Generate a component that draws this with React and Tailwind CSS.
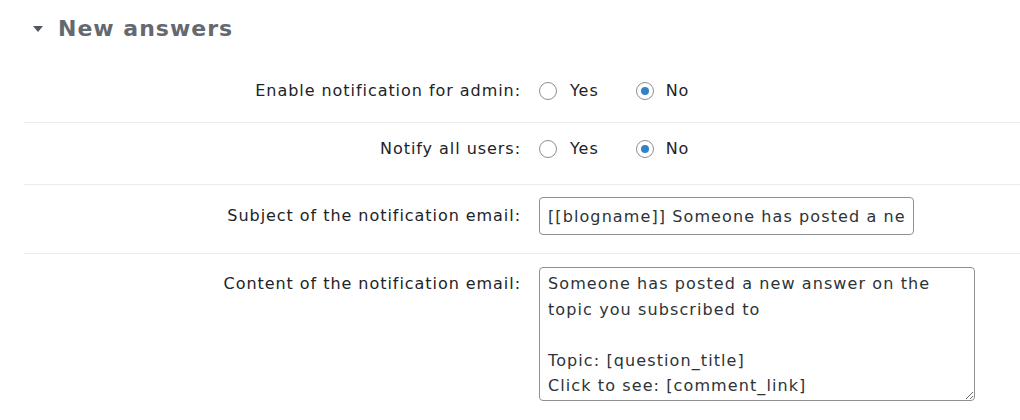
import React from 'react';

const Radio = ({ checked }) => (
    <span className="w-[18px] h-[18px] rounded-full border border-[#8c8f94] bg-white flex items-center justify-center shrink-0">
        {checked && <span className="w-[8px] h-[8px] rounded-full bg-[#3582c4]" />}
    </span>
);

const RadioGroup = ({ value }) => (
    <div className="flex items-center">
        <label className="flex items-center gap-[13px] mr-[37px]">
            <Radio checked={value === 'yes'} />
            <span>Yes</span>
        </label>
        <label className="flex items-center gap-[12px]">
            <Radio checked={value === 'no'} />
            <span>No</span>
        </label>
    </div>
);

const Row = ({ label, children, className = '', labelClass = '' }) => (
    <div className={`flex border-b border-[#ebebeb] ${className}`}>
        <div className={`w-[515px] pr-[18px] text-right shrink-0 ${labelClass}`}>{label}</div>
        <div className="flex-1">{children}</div>
    </div>
);

const App = () => {
    return (
        <div className="w-[1020px] h-[420px] overflow-hidden bg-white text-[16px] leading-[22px] tracking-[0.95px] text-[#1d2327]" style={{ fontFamily: '"DejaVu Sans", Verdana, sans-serif' }}>
            <div className="h-[58px] flex items-center pl-[33px]">
                <svg width="10" height="7" viewBox="0 0 10 7" className="mr-[15px]">
                    <polygon points="0,0 10,0 5,6" fill="#50575e" />
                </svg>
                <h2 className="text-[22px] font-bold tracking-[1px] text-[#646970]">New answers</h2>
            </div>
            <div className="ml-[24px]">
                <Row label="Enable notification for admin:" className="pt-[22px] pb-[20px] items-center">
                    <RadioGroup value="no" />
                </Row>
                <Row label="Notify all users:" className="pt-[15px] pb-[24px] items-center">
                    <RadioGroup value="no" />
                </Row>
                <Row label="Subject of the notification email:" className="pt-[12px] pb-[18px] items-center">
                    <input
                        type="text"
                        defaultValue="[[blogname]] Someone has posted a new answer"
                        className="w-[375px] h-[38px] px-[8px] border border-[#8c8f94] rounded-[4px] outline-none text-[#2c3338] tracking-[1.1px]"
                    />
                </Row>
                <Row label="Content of the notification email:" className="pt-[13px] border-b-0" labelClass="pt-[6px]">
                    <textarea
                        defaultValue={'Someone has posted a new answer on the topic you subscribed to\n\nTopic: [question_title]\nClick to see: [comment_link]'}
                        className="w-[436px] h-[134px] px-[8px] py-[3px] leading-[25.5px] tracking-[1.1px] border border-[#8c8f94] rounded-[4px] outline-none text-[#2c3338] block"
                    />
                </Row>
            </div>
        </div>
    );
};

export default App;
